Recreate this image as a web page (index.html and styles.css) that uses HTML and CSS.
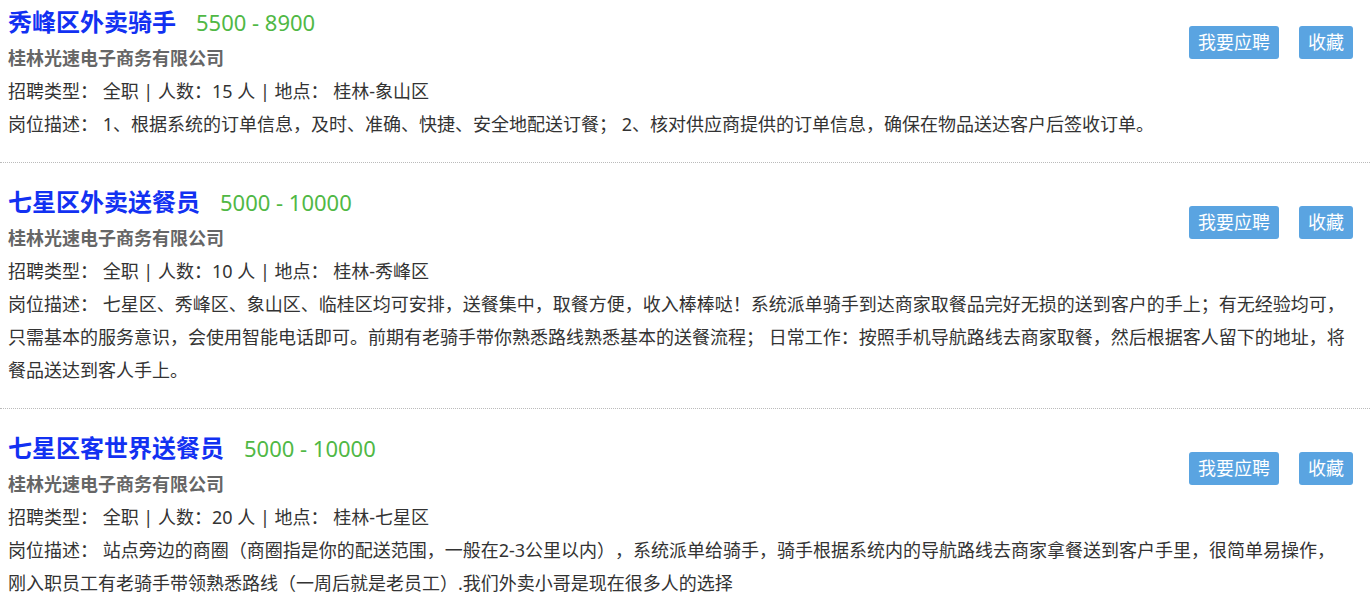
FILE: index.html
```html
<!DOCTYPE html>
<html lang="zh-CN">
  <head>
    <meta charset="UTF-8" />
    <title>招聘信息</title>
    <link rel="stylesheet" href="styles.css">
  </head>
  <body>
    <div class="job-list">
      <div class="job">
        <div class="actions">
          <a class="btn" href="#">我要应聘</a>
          <a class="btn" href="#">收藏</a>
        </div>
        <h3 class="job-title">秀峰区外卖骑手<span class="salary">5500 - 8900</span></h3>
        <p class="company">桂林光速电子商务有限公司</p>
        <p class="info">招聘类型： 全职 | 人数：15 人 | 地点： 桂林-象山区</p>
        <p class="info">岗位描述： 1、根据系统的订单信息，及时、准确、快捷、安全地配送订餐； 2、核对供应商提供的订单信息，确保在物品送达客户后签收订单。</p>
      </div>

      <div class="job">
        <div class="actions">
          <a class="btn" href="#">我要应聘</a>
          <a class="btn" href="#">收藏</a>
        </div>
        <h3 class="job-title">七星区外卖送餐员<span class="salary">5000 - 10000</span></h3>
        <p class="company">桂林光速电子商务有限公司</p>
        <p class="info">招聘类型： 全职 | 人数：10 人 | 地点： 桂林-秀峰区</p>
        <p class="info">岗位描述： 七星区、秀峰区、象山区、临桂区均可安排，送餐集中，取餐方便，收入棒棒哒！系统派单骑手到达商家取餐品完好无损的送到客户的手上；有无经验均可，只需基本的服务意识，会使用智能电话即可。前期有老骑手带你熟悉路线熟悉基本的送餐流程； 日常工作：按照手机导航路线去商家取餐，然后根据客人留下的地址，将餐品送达到客人手上。</p>
      </div>

      <div class="job">
        <div class="actions">
          <a class="btn" href="#">我要应聘</a>
          <a class="btn" href="#">收藏</a>
        </div>
        <h3 class="job-title">七星区客世界送餐员<span class="salary">5000 - 10000</span></h3>
        <p class="company">桂林光速电子商务有限公司</p>
        <p class="info">招聘类型： 全职 | 人数：20 人 | 地点： 桂林-七星区</p>
        <p class="info">岗位描述： 站点旁边的商圈（商圈指是你的配送范围，一般在2-3公里以内），系统派单给骑手，骑手根据系统内的导航路线去商家拿餐送到客户手里，很简单易操作，刚入职员工有老骑手带领熟悉路线（一周后就是老员工）.我们外卖小哥是现在很多人的选择</p>
      </div>
    </div>
  </body>
</html>
```

FILE: styles.css
```css
body {
  margin: 0;
  font-family: "Noto Sans", "Noto Sans CJK SC", sans-serif;
  color: #333;
  background: #fff;
  text-spacing-trim: space-all;
}

.job {
  padding: 19px 17px 21px 8px;
  border-bottom: 1px dotted #bbb;
}

.job:first-child {
  padding-top: 2px;
}

.actions {
  float: right;
  display: flex;
  gap: 20px;
  margin-top: 24px;
}

.btn {
  height: 33px;
  line-height: 33px;
  padding: 0 9px;
  font-size: 18px;
  color: #fff;
  background: #5aa4e1;
  border-radius: 3px;
  text-decoration: none;
}

.job-title {
  margin: 0;
  font-size: 24px;
  line-height: 40px;
  font-weight: bold;
  color: #1231f2;
}

.salary {
  margin-left: 20px;
  font-size: 22px;
  font-weight: normal;
  color: #50b845;
}

.company {
  margin: 0;
  font-size: 18px;
  line-height: 33px;
  font-weight: bold;
  color: #666;
}

.info {
  margin: 0;
  font-size: 18px;
  line-height: 33px;
}
```
